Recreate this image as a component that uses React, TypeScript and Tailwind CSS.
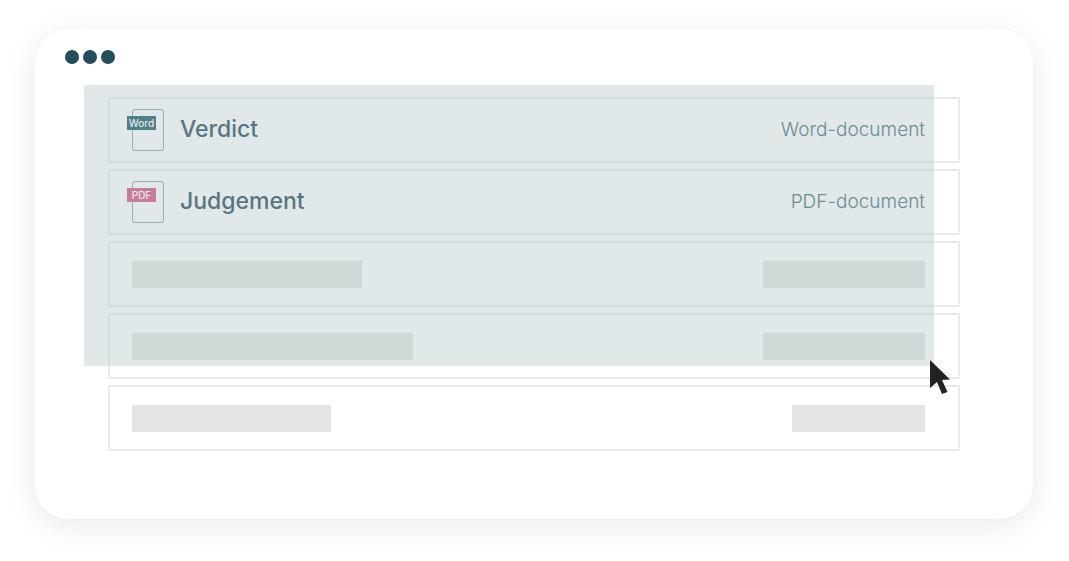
const font = { fontFamily: '"Inter", "Liberation Sans", sans-serif' }

function FileIcon({ label, color }: { label: string; color: string }) {
  return (
    <div className="relative ml-[22px] h-[42px] w-[32px] shrink-0 rounded-[3px] border border-[#7fa0a8]">
      <div className={`absolute left-[-6px] top-[6px] flex h-[14px] w-[29px] items-center justify-center text-[10px] font-medium leading-none text-white ${color}`}>
        {label}
      </div>
    </div>
  )
}

function FileRow({ name, kind, label, color }: { name: string; kind: string; label: string; color: string }) {
  return (
    <div className="flex h-[66px] items-center border-2 border-[#ebebea] pr-[33px]">
      <FileIcon label={label} color={color} />
      <span className="mb-[2px] ml-[16px] text-[23px] font-medium text-[#17424b]">{name}</span>
      <span className="ml-auto text-[19px] font-light text-[#3a646c]">{kind}</span>
    </div>
  )
}

function BlankRow({ left, right }: { left: string; right: string }) {
  return (
    <div className="flex h-[66px] items-center justify-between border-2 border-[#ebebea] pl-[22px] pr-[33px]">
      <div className={`h-[27px] bg-[#e5e4e2] ${left}`}></div>
      <div className={`h-[27px] bg-[#e5e4e2] ${right}`}></div>
    </div>
  )
}

export default function App() {
  return (
    <div className="h-[561px] w-[1069px] overflow-hidden bg-white pl-[35px] pt-[29px]" style={font}>
      <div className="relative h-[490px] w-[998px] rounded-[34px] bg-white pl-[73px] pt-[21px] shadow-[0_6px_34px_rgba(0,0,0,0.09)]">
        {/* Window dots */}
        <div className="absolute left-[30px] top-[21px] flex gap-[3.75px]">
          <div className="h-[14px] w-[14px] rounded-full bg-[#234e5a]"></div>
          <div className="h-[14px] w-[14px] rounded-full bg-[#234e5a]"></div>
          <div className="h-[14px] w-[14px] rounded-full bg-[#234e5a]"></div>
        </div>

        <div className="mt-[47px] flex w-[852px] flex-col gap-[6px]">
          <FileRow name="Verdict" kind="Word-document" label="Word" color="bg-[#0c505c]" />
          <FileRow name="Judgement" kind="PDF-document" label="PDF" color="bg-[#d7497b]" />
          <BlankRow left="w-[230px]" right="w-[162px]" />
          <BlankRow left="w-[281px]" right="w-[162px]" />
          <BlankRow left="w-[199px]" right="w-[133px]" />
        </div>

        {/* Drag selection */}
        <div className="absolute left-[49px] top-[56px] h-[281px] w-[850px] bg-[#b4c6ca]/40"></div>

        {/* Cursor */}
        <svg className="absolute left-[894px] top-[330px]" width="24" height="36" viewBox="0 0 24 36">
          <path d="M1 1 L21 20.5 L13 21 L18.5 33 L13 35 L8 23 L1 29 Z" fill="#222222" />
        </svg>
      </div>
    </div>
  )
}
